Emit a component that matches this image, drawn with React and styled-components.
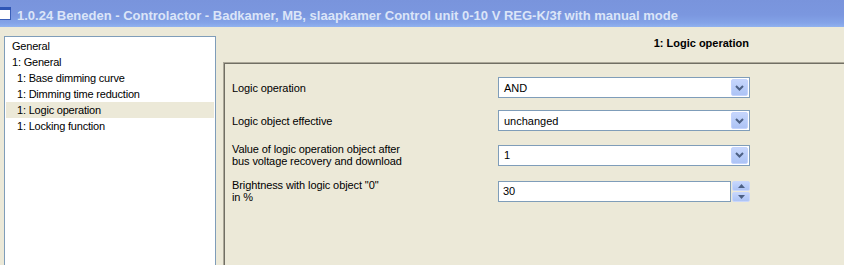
import React from "react";
import styled, { createGlobalStyle } from "styled-components";

const GlobalStyle = createGlobalStyle`
  html, body {
    margin: 0;
    padding: 0;
    background: #ece9d8;
  }
  body {
    font-family: Tahoma, "Liberation Sans", Arial, sans-serif;
    font-size: 11px;
    color: #000;
  }
`;

const Window = styled.div`
  width: 844px;
  height: 265px;
  overflow: hidden;
  display: flex;
  flex-direction: column;
  background: #ece9d8;
`;

const TitleBar = styled.div`
  flex: none;
  height: 27px;
  display: flex;
  align-items: center;
  gap: 6px;
  background: linear-gradient(to bottom, #7994dc 0%, #7b97df 55%, #84a3e8 85%, #91b2ef 100%);
  color: #dbe5f8;
  font-family: "Liberation Sans", Arial, sans-serif;
  font-weight: bold;
  font-size: 13px;
  white-space: nowrap;
`;

const TitleText = styled.span`
  padding-top: 3px;
`;

const Body = styled.div`
  flex: 1;
  display: flex;
  align-items: stretch;
  padding: 9px 0 0 4px;
  min-height: 0;
`;

const Tree = styled.ul`
  list-style: none;
  margin: 0 0 -10px 0;
  padding: 1px 1px 0;
  width: 208px;
  flex: none;
  background: #fff;
  border: 1px solid #7f9db9;
  letter-spacing: -0.2px;
`;

const TreeItem = styled.li`
  height: 16px;
  line-height: 16px;
  padding-left: ${p => (p.$depth === 2 ? 11 : 6)}px;
  background: ${p => (p.$selected ? "#ece9d8" : "transparent")};
  white-space: nowrap;
`;

const Right = styled.div`
  flex: 1;
  display: flex;
  flex-direction: column;
  margin-left: 7px;
  margin-right: -20px;
`;

const Heading = styled.div`
  flex: none;
  height: 17px;
  padding: 0 115px 0 0;
  margin-bottom: 9px;
  text-align: right;
  font-weight: bold;
  line-height: 15px;
`;

const Panel = styled.div`
  flex: 1;
  margin-bottom: -10px;
  border-top: 1px solid #aca899;
  border-left: 1px solid #aca899;
  box-shadow: inset 1px 1px 0 #716f64;
  padding: 14px 0 0 8px;
`;

const Form = styled.div`
  display: grid;
  grid-template-columns: 266px 252px;
  row-gap: 12px;
  align-items: center;
`;

const Label = styled.div`
  line-height: 12px;
  letter-spacing: -0.1px;
`;

const Combo = styled.div`
  height: 21px;
  box-sizing: border-box;
  border: 1px solid #7f9db9;
  background: #fff;
  display: flex;
  align-items: center;
  padding: 1px;
`;

const ComboValue = styled.span`
  flex: 1;
  padding-left: 4px;
`;

const ComboButton = styled.div`
  width: 17px;
  height: 17px;
  box-sizing: border-box;
  border: 1px solid #c3d3fd;
  border-radius: 2px;
  background: linear-gradient(to bottom, #c6d6fc 0%, #b6cbf8 60%, #adc3f5 100%);
  display: flex;
  align-items: center;
  justify-content: center;
`;

const SpinRow = styled.div`
  display: flex;
  align-items: stretch;
  height: 21px;
`;

const SpinInput = styled.div`
  flex: 1;
  box-sizing: border-box;
  border: 1px solid #7f9db9;
  background: #fff;
  padding-left: 4px;
  line-height: 19px;
`;

const SpinButtons = styled.div`
  width: 18px;
  display: flex;
  flex-direction: column;
  gap: 1px;
  padding: 0 0 0 1px;
`;

const SpinButton = styled.div`
  flex: 1;
  border-radius: 2px;
  background: linear-gradient(to bottom, #c6d6fc 0%, #b6cbf8 60%, #adc3f5 100%);
  border: 1px solid #c9d7fb;
  display: flex;
  align-items: center;
  justify-content: center;
`;

function WindowIcon() {
  return (
    <svg width="11" height="13" viewBox="0 0 11 13">
      <rect x="-4" y="0.5" width="14.5" height="12" fill="#fff" stroke="#3a5fb8" />
      <rect x="-4" y="0" width="15" height="3" fill="#2f55b5" />
    </svg>
  );
}

function Chevron() {
  return (
    <svg width="9" height="6" viewBox="0 0 9 6">
      <path d="M1 1 L4.5 4.5 L8 1" fill="none" stroke="#4d6185" strokeWidth="2" />
    </svg>
  );
}

function SpinArrow({ up }) {
  return (
    <svg width="7" height="4" viewBox="0 0 7 4">
      <path d={up ? "M0 4 L3.5 0 L7 4 Z" : "M0 0 L3.5 4 L7 0 Z"} fill="#4d6185" />
    </svg>
  );
}

function ComboBox({ value }) {
  return (
    <Combo>
      <ComboValue>{value}</ComboValue>
      <ComboButton>
        <Chevron />
      </ComboButton>
    </Combo>
  );
}

const treeItems = [
  { text: "General", depth: 1 },
  { text: "1: General", depth: 1 },
  { text: "1: Base dimming curve", depth: 2 },
  { text: "1: Dimming time reduction", depth: 2 },
  { text: "1: Logic operation", depth: 2, selected: true },
  { text: "1: Locking function", depth: 2 },
];

export default function App() {
  return (
    <Window>
      <GlobalStyle />
      <TitleBar>
        <WindowIcon />
        <TitleText>1.0.24 Beneden - Controlactor - Badkamer, MB, slaapkamer Control unit 0-10 V REG-K/3f with manual mode</TitleText>
      </TitleBar>
      <Body>
        <Tree>
          {treeItems.map(item => (
            <TreeItem key={item.text} $depth={item.depth} $selected={item.selected}>
              {item.text}
            </TreeItem>
          ))}
        </Tree>
        <Right>
          <Heading>1: Logic operation</Heading>
          <Panel>
            <Form>
              <Label>Logic operation</Label>
              <ComboBox value="AND" />
              <Label>Logic object effective</Label>
              <ComboBox value="unchanged" />
              <Label>
                Value of logic operation object after
                <br />
                bus voltage recovery and download
              </Label>
              <ComboBox value="1" />
              <Label>
                Brightness with logic object "0"
                <br />
                in %
              </Label>
              <SpinRow>
                <SpinInput>30</SpinInput>
                <SpinButtons>
                  <SpinButton>
                    <SpinArrow up />
                  </SpinButton>
                  <SpinButton>
                    <SpinArrow />
                  </SpinButton>
                </SpinButtons>
              </SpinRow>
            </Form>
          </Panel>
        </Right>
      </Body>
    </Window>
  );
}
